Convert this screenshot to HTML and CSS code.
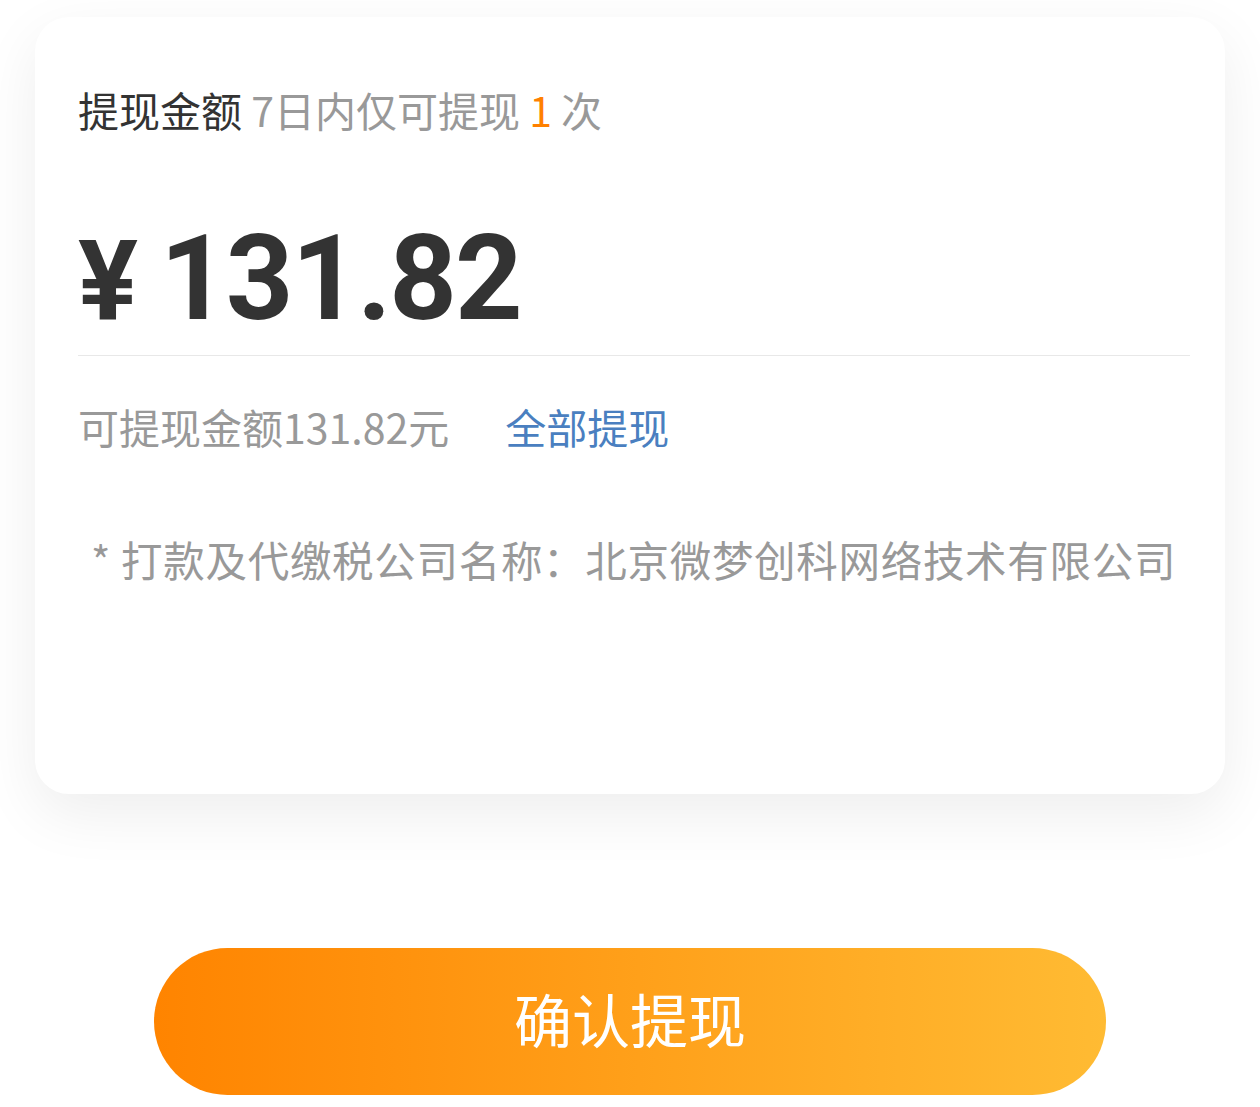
FILE: index.html
```html
<!DOCTYPE html>
<html lang="zh-CN">
<head>
<meta charset="utf-8">
<title>提现</title>
<link rel="stylesheet" href="styles.css">
</head>
<body>
<div class="page">
  <div class="card">
    <div class="title"><span class="title-main">提现金额</span> <span class="title-sub">7日内仅可提现 <em class="hl">1</em> 次</span></div>
    <div class="amount"><span class="yen">¥</span><span class="num">131.82</span></div>
    <div class="avail"><span class="avail-text">可提现金额131.82元</span><a class="all" href="#">全部提现</a></div>
    <div class="note">* 打款及代缴税公司名称：北京微梦创科网络技术有限公司</div>
  </div>
  <div class="btn-wrap"><button class="btn">确认提现</button></div>
</div>
</body>
</html>
```

FILE: styles.css
```css
html, body {
  margin: 0;
  padding: 0;
  background: #ffffff;
}
body {
  font-family: "Noto Sans CJK SC", "Noto Sans", sans-serif;
  width: 1260px;
  height: 1107px;
  overflow: hidden;
}
.page {
  padding: 17px 35px 0 35px;
}
.card {
  background: #fff;
  border-radius: 34px;
  box-shadow: 0 20px 60px rgba(0, 0, 0, 0.07);
  height: 777px;
  box-sizing: border-box;
  padding: 66px 35px 0 43px;
}
.title {
  font-size: 41px;
  line-height: 52px;
  white-space: nowrap;
}
.title-main { color: #333; }
.title-sub { color: #999; }
.hl { font-style: normal; color: #ff8000; }
.amount {
  display: flex;
  align-items: baseline;
  margin-top: 84px;
  padding-bottom: 14px;
  border-bottom: 1px solid #e8e8e8;
  color: #333;
  font-family: Roboto, "Liberation Sans", sans-serif;
  font-weight: 700;
  line-height: 120px;
}
.yen {
  font-size: 112px;
  margin-right: 22px;
}
.num {
  font-size: 118px;
  letter-spacing: -2px;
}
.avail {
  display: flex;
  align-items: center;
  margin-top: 44px;
  font-size: 41px;
  line-height: 52px;
}
.avail-text { color: #999; }
.all {
  color: #4a7fc0;
  text-decoration: none;
  margin-left: 56px;
}
.note {
  margin-top: 81px;
  padding-left: 13px;
  font-size: 41.5px;
  letter-spacing: 0.7px;
  line-height: 52px;
  color: #999;
  white-space: nowrap;
}
.btn-wrap {
  display: flex;
  justify-content: center;
  margin-top: 154px;
}
.btn {
  width: 952px;
  height: 147px;
  border: none;
  border-radius: 74px;
  background: linear-gradient(90deg, #ff8400 0%, #ffbb33 100%);
  color: #fff;
  font-family: "Noto Sans CJK SC", sans-serif;
  font-size: 58px;
  line-height: 1;
  padding: 0 0 8px 0;
}
```
